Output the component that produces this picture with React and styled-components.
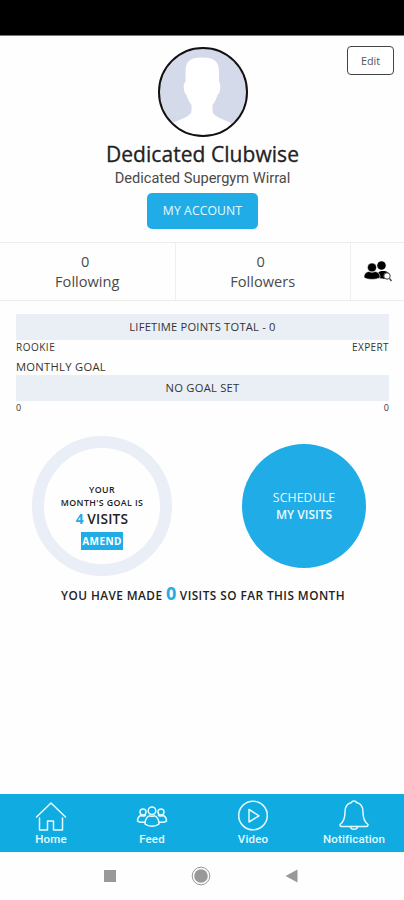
import React from "react";
import styled, { createGlobalStyle } from "styled-components";

const GlobalStyle = createGlobalStyle`
	* {
		box-sizing: border-box;
	}
	body {
		margin: 0;
		background: #fefefe;
		font-family: "Open Sans", "Noto Sans", sans-serif;
	}
`;

const Screen = styled.div`
	display: flex;
	flex-direction: column;
	width: 404px;
	height: 900px;
	overflow: hidden;
	background: #fefefe;
	color: #333;
`;
const StatusBar = styled.div`
	height: 36px;
	flex-shrink: 0;
	background: #000;
	border-bottom: 1px solid #777;
`;
const Text = styled.div`
	font-family: ${(p) => p.$font || "inherit"};
	font-size: ${(p) => p.$size}px;
	line-height: ${(p) => p.$line}px;
	font-weight: ${(p) => p.$weight || 400};
	letter-spacing: ${(p) => p.$spacing || 0}px;
	color: ${(p) => p.$color || "inherit"};
	white-space: nowrap;
`;
const Name = styled(Text)`
	-webkit-text-stroke: 0.3px #222;
`;

const Profile = styled.div`
	display: grid;
	grid-template-columns: 84px 1fr 84px;
	height: 206px;
	padding: 10px 0 0;
	flex-shrink: 0;
`;
const ProfileInfo = styled.div`
	grid-column: 2;
	display: flex;
	flex-direction: column;
	align-items: center;
	padding-left: 1px;
`;
const Avatar = styled.svg`
	display: block;
	width: 92px;
	height: 92px;
	margin-bottom: 2px;
`;
const AccountButton = styled.button`
	width: 111px;
	height: 36px;
	margin-top: 4px;
	padding: 0;
	border: 0;
	border-radius: 5px;
	background: #20ade7;
	font-family: inherit;
`;
const EditButton = styled.button`
	width: 47px;
	height: 29px;
	margin: 0 0 0 27px;
	padding: 0;
	border: 1px solid #444;
	border-radius: 4px;
	background: #fff;
	font-family: inherit;
`;

const Stats = styled.div`
	display: flex;
	height: 59px;
	flex-shrink: 0;
	border-top: 1px solid #ebebeb;
	border-bottom: 1px solid #ebebeb;
`;
const Stat = styled.div`
	display: flex;
	flex-direction: column;
	align-items: center;
	width: 175.5px;
	padding-top: 9px;
	border-right: 1px solid #efefef;
	color: #4a4a4a;
`;
const Count = styled(Text)`
	margin-right: 4px;
`;
const FindFriends = styled.div`
	flex: 1;
	padding: 17px 0 0 13px;
`;

const Goals = styled.div`
	height: 135px;
	flex-shrink: 0;
	padding: 13px 15px 0 16px;
`;
const Bar = styled.div`
	display: flex;
	justify-content: center;
	height: 26px;
	background: #eaeff6;
`;
const Range = styled.div`
	display: flex;
	justify-content: space-between;
	height: ${(p) => p.$height}px;
`;

const Circles = styled.div`
	display: flex;
	justify-content: space-between;
	align-items: center;
	height: 140px;
	flex-shrink: 0;
	padding: 0 38px 0 32px;
`;
const GoalRing = styled.div`
	display: flex;
	flex-direction: column;
	align-items: center;
	width: 140px;
	height: 140px;
	padding-top: 36px;
	border: 12px solid #eaeff7;
	border-radius: 50%;
	color: #222;
`;
const Amend = styled.button`
	display: flex;
	justify-content: center;
	width: 42px;
	height: 18px;
	margin-top: 4px;
	padding: 0;
	border: 0;
	background: #20ade7;
	font-family: inherit;
`;
const Schedule = styled.button`
	display: flex;
	flex-direction: column;
	align-items: center;
	justify-content: center;
	width: 124px;
	height: 124px;
	padding: 0 0 1px;
	border: 0;
	border-radius: 50%;
	background: #20ade7;
	font-family: inherit;
`;
const Blue = styled.span`
	color: #20ade7;
	font-size: ${(p) => p.$size || "inherit"};
	font-weight: 700;
	letter-spacing: 0;
`;
const Summary = styled.div`
	display: flex;
	justify-content: center;
	height: 218px;
	flex-shrink: 0;
	padding: 3px 0 0 2px;
	color: #222;
`;

const Nav = styled.div`
	display: grid;
	grid-template-columns: repeat(4, 101px);
	height: 58px;
	flex-shrink: 0;
	background: #10abe0;
`;
const NavItem = styled.div`
	display: flex;
	flex-direction: column;
	align-items: center;
	padding: 5px 0 0 1px;
	color: #e4fbff;
`;
const Icon = styled.svg`
	display: block;
	width: 34px;
	height: 33px;
	fill: none;
	stroke: currentColor;
	stroke-width: 1.5;
	stroke-linejoin: round;
	stroke-linecap: round;
`;
const SystemBar = styled.div`
	display: flex;
	justify-content: center;
	gap: 71px;
	height: 48px;
	padding: 13px 2px 0 0;
`;
const SystemIcon = styled.svg`
	display: block;
	width: 20px;
	height: 22px;
	fill: #999;
`;

const navItems = [
	{
		label: "Home",
		icon: (
			<>
				<path d="M2.5 18 17 4l14.500 14" />
				<path d="M5.500 19v12h8v-9h6v9h9V19" />
			</>
		),
	},
	{
		label: "Feed",
		icon: (
			<>
				<circle cx="17" cy="11.800" r="3.800" />
				<circle cx="8" cy="13" r="3" />
				<circle cx="26" cy="13" r="3" />
				<path d="M10 25c0-5 2.500-8 5-8.200 1.300.700 2.700.700 4 0 2.500.200 5 3.200 5 8.200-3.500 3-10.500 3-14 0Z" />
				<path d="M9.500 23.200c-2.500.300-5.500 0-7-1 0-3.200 1.200-5 3.500-5.700 1.300.700 2.500.700 4.500 0" />
				<path d="M24.500 23.200c2.500.300 5.500 0 7-1 0-3.200-1.200-5-3.500-5.700-1.300.700-2.500.700-4.500 0" />
			</>
		),
	},
	{
		label: "Video",
		icon: (
			<>
				<circle cx="17" cy="16.500" r="14.300" />
				<path d="M13 10.500v12.500l10-6.200Z" />
			</>
		),
	},
	{
		label: "Notification",
		icon: (
			<>
				<path d="M14.500 3.500c.5-2 4.500-2 5 0 4.500 1 6.500 4.800 6.500 9.500 0 7 1.500 10 5 12.500 0 1.500-.5 2-1.500 2h-25C3.500 27.500 3 27 3 25.500c3.500-2.500 5-5.500 5-12.500 0-4.700 2-8.500 6.500-9.500Z" />
				<path d="M13.500 28c.5 3 6.500 3 7 0" />
			</>
		),
	},
];

const App = () => {
	return (
		<Screen>
			<GlobalStyle />
			<StatusBar />
			<Profile>
				<ProfileInfo>
					<Avatar viewBox="0 0 92 92">
						<defs>
							<clipPath id="face">
								<circle cx="46" cy="46" r="44" />
							</clipPath>
						</defs>
						<circle cx="46" cy="46" r="43" fill="#d5daea" />
						<path
							clipPath="url(#face)"
							fill="#fff"
							d="M28.500 26C28.500 16 32 11.500 45 11.500S62 16 62 26v10c1.500 1 1.500 4 1 8-.5 3-1.500 4-2.500 5-1 4-3 7-5 10v6c0 5 9 7.500 17.500 11.500L82 92H8l9-15.500C25 72.500 34.500 70 34.500 65v-6c-2-3-4-6-5-10-1-1-2-2-2.500-5-.5-4-.5-7 1.500-8Z"
						/>
						<circle cx="46" cy="46" r="44" fill="none" stroke="#111" strokeWidth="2" />
					</Avatar>
					<Name $size={21} $line={28} $spacing={0.05} $color="#222">
						Dedicated Clubwise
					</Name>
					<Text $size={14.6} $line={21} $font="Roboto, sans-serif" $color="#4a4a4a">
						Dedicated Supergym Wirral
					</Text>
					<AccountButton>
						<Text $size={12.2} $line={36} $spacing={0.1} $color="#e9faff">
							MY ACCOUNT
						</Text>
					</AccountButton>
				</ProfileInfo>
				<EditButton>
					<Text $size={10.8} $line={27} $color="#555">
						Edit
					</Text>
				</EditButton>
			</Profile>

			<Stats>
				<Stat>
					<Count $size={14.6} $line={19}>0</Count>
					<Text $size={14.6} $line={20}>Following</Text>
				</Stat>
				<Stat>
					<Count $size={14.6} $line={19}>0</Count>
					<Text $size={14.6} $line={20}>Followers</Text>
				</Stat>
				<FindFriends>
					<svg width="30" height="24" viewBox="0 0 30 24">
						<circle cx="17.500" cy="5.500" r="4.300" />
						<path d="M14 18c-1-6 1-7 5-7 4 0 5.500 1 6.500 4l-4 4Z" />
						<circle cx="8" cy="7.500" r="4.500" stroke="#fff" strokeWidth=".6" />
						<path d="M0 17.500c0-4 2-5.500 5-6 2 1 4 1 6 0 3 .5 5 2 5 6-3 2.500-13 2.500-16 0Z" stroke="#fff" strokeWidth=".6" />
						<circle cx="23" cy="16" r="3.200" fill="#fff" stroke="#444" />
						<path d="m25.500 18.500 2 2.500" stroke="#444" strokeWidth="1.300" />
					</svg>
				</FindFriends>
			</Stats>

			<Goals>
				<Bar>
					<Text $size={11.2} $line={26} $weight={500} $spacing={0.2}>LIFETIME POINTS TOTAL - 0</Text>
				</Bar>
				<Range $height={18}>
					<Text $size={10} $line={14} $weight={500} $spacing={0.5}>ROOKIE</Text>
					<Text $size={10} $line={14} $weight={500} $spacing={0.4}>EXPERT</Text>
				</Range>
				<Text $size={11.2} $line={17} $weight={500} $spacing={0.3}>MONTHLY GOAL</Text>
				<Bar>
					<Text $size={11.2} $line={26} $weight={500} $spacing={0.25}>NO GOAL SET</Text>
				</Bar>
				<Range $height={14}>
					<Text $size={9} $line={13}>0</Text>
					<Text $size={9} $line={13}>0</Text>
				</Range>
			</Goals>

			<Circles>
				<GoalRing>
					<Text $size={8.8} $line={13} $weight={600} $spacing={0.4}>YOUR</Text>
					<Text $size={8.8} $line={13} $weight={600} $spacing={0.4}>MONTH'S GOAL IS</Text>
					<Text $size={13.7} $line={18} $weight={600} $spacing={0.2}>
						<Blue>4</Blue> VISITS
					</Text>
					<Amend>
						<Text $size={10} $line={19} $weight={700} $spacing={0.4} $color="#fff">AMEND</Text>
					</Amend>
				</GoalRing>
				<Schedule>
					<Text $size={12.3} $line={17} $spacing={0.1} $color="#e9faff">SCHEDULE</Text>
					<Text $size={12} $line={17} $weight={600} $color="#e9faff">MY VISITS</Text>
				</Schedule>
			</Circles>
			<Summary>
				<Text $size={11.8} $line={28} $weight={600} $spacing={0.45}>
					YOU HAVE MADE <Blue $size="18px">0</Blue> VISITS SO FAR THIS MONTH
				</Text>
			</Summary>

			<Nav>
				{navItems.map((item) => (
					<NavItem key={item.label}>
						<Icon viewBox="0 0 34 33">{item.icon}</Icon>
						<Text $size={11.5} $line={14} $weight={500} $spacing={0.15} $font="Roboto, sans-serif">
							{item.label}
						</Text>
					</NavItem>
				))}
			</Nav>
			<SystemBar>
				<SystemIcon viewBox="0 0 20 22">
					<rect x="4" y="5" width="12" height="12" />
				</SystemIcon>
				<SystemIcon viewBox="0 0 20 22">
					<circle cx="10" cy="11" r="8.800" fill="none" stroke="#999" />
					<circle cx="10" cy="11" r="6.800" />
				</SystemIcon>
				<SystemIcon viewBox="0 0 20 22">
					<path d="M3.500 11 15.500 4.500v13Z" />
				</SystemIcon>
			</SystemBar>
		</Screen>
	);
};

export default App;
